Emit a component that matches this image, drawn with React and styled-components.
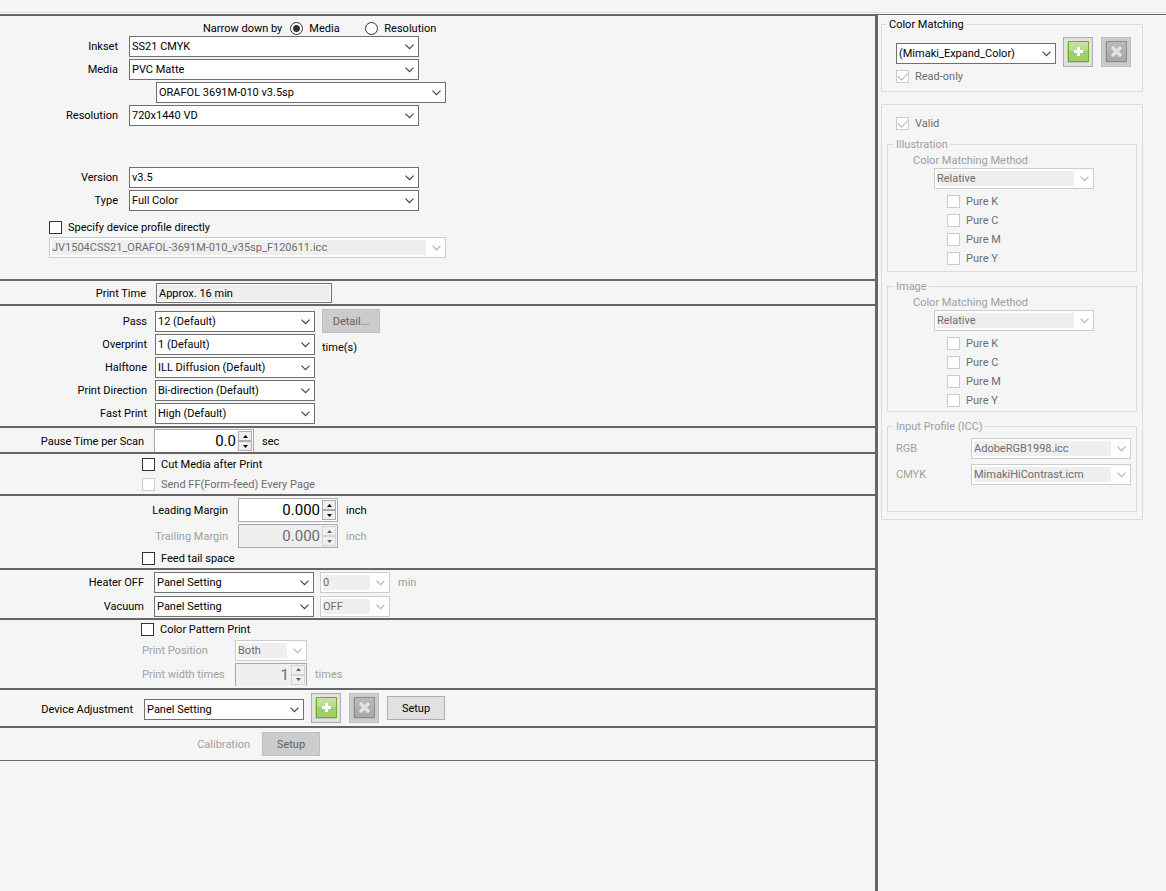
import React, { useId, useState } from 'react';
import styled, { createGlobalStyle, css } from 'styled-components';

// Drop-down with a thin chevron
const Combo = ({ id, options, width, disabled, label }) => (
  <ComboWrap $width={width}>
    <ComboSelect id={id} disabled={disabled} aria-label={label} defaultValue={options[0]}>
      {options.map((option) => (
        <option key={option}>{option}</option>
      ))}
    </ComboSelect>
    <Chevron viewBox="0 0 9 6" $disabled={disabled}>
      <path d="M0.5 0.7 L4.5 4.7 L8.5 0.7" fill="none" strokeWidth="1.1" />
    </Chevron>
  </ComboWrap>
);

const LabeledCombo = ({ text, labelWidth, gap, top, width, options }) => {
  const id = useId();
  return (
    <Row $gap={gap} $top={top}>
      <Label htmlFor={id} $width={labelWidth}>{text}</Label>
      <Combo id={id} width={width} options={options} />
    </Row>
  );
};

const Check = ({ text, disabled, defaultChecked }) => (
  <CheckLabel $disabled={disabled}>
    <CheckBox type="checkbox" disabled={disabled} defaultChecked={defaultChecked} />
    {text}
  </CheckLabel>
);

// Numeric field with up / down buttons
const Spinner = ({ id, initial, step, digits, width = 100, disabled }) => {
  const [value, setValue] = useState(initial);
  const change = (delta) => {
    setValue((prev) => Math.max(0, Number(prev) + delta).toFixed(digits));
  };

  return (
    <SpinnerWrap $width={width} $disabled={disabled}>
      <SpinnerInput id={id} type="text" value={value} disabled={disabled} onChange={(e) => setValue(e.target.value)} />
      <SpinnerButtons>
        <SpinnerButton type="button" aria-label="Increase" disabled={disabled} onClick={() => change(step)}>
          <svg width="5" height="3" viewBox="0 0 5 3"><path d="M0 3 L2.5 0 L5 3 Z" fill="currentColor" /></svg>
        </SpinnerButton>
        <SpinnerButton type="button" aria-label="Decrease" disabled={disabled} onClick={() => change(-step)}>
          <svg width="5" height="3" viewBox="0 0 5 3"><path d="M0 0 L2.5 3 L5 0 Z" fill="currentColor" /></svg>
        </SpinnerButton>
      </SpinnerButtons>
    </SpinnerWrap>
  );
};

const AddButton = () => (
  <IconButton type="button" aria-label="Add">
    <svg width="22" height="22" viewBox="0 0 22 22">
      <defs>
        <linearGradient id="addFill" x1="0" y1="0" x2="0" y2="1">
          <stop offset="0" stopColor="#cbe3a8" />
          <stop offset="0.45" stopColor="#b8da8a" />
          <stop offset="0.5" stopColor="#a3cf68" />
          <stop offset="1" stopColor="#a5d066" />
        </linearGradient>
      </defs>
      <rect x="0" y="1" width="21" height="21" fill="#c4c8c0" />
      <rect x="1.5" y="0.5" width="20" height="20" fill="url(#addFill)" stroke="#6fae1c" />
      <path d="M10 6 H13 V9 H16 V12 H13 V15 H10 V12 H7 V9 H10 Z" fill="#fff" />
    </svg>
  </IconButton>
);

const RemoveButton = () => (
  <IconButton type="button" aria-label="Remove" disabled>
    <svg width="22" height="22" viewBox="0 0 22 22">
      <defs>
        <linearGradient id="removeFill" x1="0" y1="0" x2="0" y2="1">
          <stop offset="0" stopColor="#bababa" />
          <stop offset="1" stopColor="#a6a6a6" />
        </linearGradient>
      </defs>
      <rect x="0" y="1" width="21" height="21" fill="#bababa" />
      <rect x="1.5" y="0.5" width="20" height="20" fill="url(#removeFill)" stroke="#8c8c8c" />
      <path d="M7 6 L16 15 M16 6 L7 15" stroke="#e2e2e2" strokeWidth="3.4" />
    </svg>
  </IconButton>
);

const MatchingMethod = ({ title, pad }) => {
  const id = useId();
  return (
    <Group $muted $pad={pad}>
      <Legend $muted>{title}</Legend>
      <MethodLabel htmlFor={id}>Color Matching Method</MethodLabel>
      <MethodBody>
        <Combo id={id} width={160} options={['Relative']} disabled />
        <PureList>
          {['K', 'C', 'M', 'Y'].map((ink) => (
            <Check key={ink} text={`Pure ${ink}`} disabled />
          ))}
        </PureList>
      </MethodBody>
    </Group>
  );
};

const App = () => {
  const [narrowBy, setNarrowBy] = useState('media');

  return (
    <>
      <GlobalStyle />
      <Page>
        <TopStrip />
        <Columns>
          <Settings>
            <Section>
              <RadioRow>
                <span>Narrow down by</span>
                <RadioLabel>
                  <Radio type="radio" name="narrow" checked={narrowBy === 'media'} onChange={() => setNarrowBy('media')} />
                  Media
                </RadioLabel>
                <RadioLabel>
                  <Radio type="radio" name="narrow" checked={narrowBy === 'resolution'} onChange={() => setNarrowBy('resolution')} />
                  Resolution
                </RadioLabel>
              </RadioRow>
              <Stack>
                <LabeledCombo text="Inkset" labelWidth={118} gap={11} width={290} options={['SS21 CMYK']} />
                <LabeledCombo text="Media" labelWidth={118} gap={11} width={290} options={['PVC Matte']} />
                <Row $indent={156}>
                  <Combo label="Media profile" width={290} options={['ORAFOL 3691M-010 v3.5sp']} />
                </Row>
                <LabeledCombo text="Resolution" labelWidth={118} gap={11} width={290} options={['720x1440 VD']} />
              </Stack>
              <Stack $top={41}>
                <LabeledCombo text="Version" labelWidth={118} gap={11} width={290} options={['v3.5']} />
                <LabeledCombo text="Type" labelWidth={118} gap={11} width={290} options={['Full Color']} />
              </Stack>
              <ProfileStack>
                <Check text="Specify device profile directly" />
                <Combo
                  label="Device profile"
                  width={397}
                  options={['JV1504CSS21_ORAFOL-3691M-010_v35sp_F120611.icc']}
                  disabled
                />
              </ProfileStack>
            </Section>

            <Section $pad="2px 0 1px">
              <Row $gap={10}>
                <Label htmlFor="printTime" $width={146}>Print Time</Label>
                <ReadOnlyInput id="printTime" type="text" readOnly value="Approx. 16 min" />
              </Row>
            </Section>

            <Section $pad="5px 0 2px">
              <PassLayout>
                <Stack>
                  <LabeledCombo text="Pass" labelWidth={147} gap={8} width={160} options={['12 (Default)']} />
                  <LabeledCombo text="Overprint" labelWidth={147} gap={8} width={160} options={['1 (Default)']} />
                  <LabeledCombo text="Halftone" labelWidth={147} gap={8} width={160} options={['ILL Diffusion (Default)']} />
                  <LabeledCombo text="Print Direction" labelWidth={147} gap={8} width={160} options={['Bi-direction (Default)']} />
                  <LabeledCombo text="Fast Print" labelWidth={147} gap={8} width={160} options={['High (Default)']} />
                </Stack>
                <PassSide>
                  <Button type="button" disabled>Detail...</Button>
                  <span>time(s)</span>
                </PassSide>
              </PassLayout>
            </Section>

            <Section $pad="1px 0 0" $clip={24}>
              <Row $gap={10}>
                <Label htmlFor="pause" $width={144}>Pause Time per Scan</Label>
                <Field>
                  <Spinner id="pause" initial="0.0" step={0.1} digits={1} />
                  <Unit>sec</Unit>
                </Field>
              </Row>
            </Section>

            <Section $pad="4px 0 3px">
              <CheckStack>
                <Check text="Cut Media after Print" />
                <Check text="Send FF(Form-feed) Every Page" disabled />
              </CheckStack>
            </Section>

            <Section $pad="2px 0 3px">
              <Stack>
                <Row $gap={10}>
                  <Label htmlFor="leading" $width={228}>Leading Margin</Label>
                  <Field>
                    <Spinner id="leading" initial="0.000" step={0.1} digits={3} />
                    <Unit>inch</Unit>
                  </Field>
                </Row>
                <Row $gap={10}>
                  <Label htmlFor="trailing" $width={228} $muted>Trailing Margin</Label>
                  <Field>
                    <Spinner id="trailing" initial="0.000" step={0.1} digits={3} disabled />
                    <Unit $muted>inch</Unit>
                  </Field>
                </Row>
                <Row $indent={142} $top={2}>
                  <Check text="Feed tail space" />
                </Row>
              </Stack>
            </Section>

            <Section $pad="2px 0 1px">
              <Stack $gap={3}>
                <Row $gap={6}>
                  <LabeledCombo text="Heater OFF" labelWidth={144} gap={10} width={160} options={['Panel Setting']} />
                  <Field>
                    <Combo label="Heater off time" width={70} options={['0']} disabled />
                    <Unit $muted>min</Unit>
                  </Field>
                </Row>
                <Row $gap={6}>
                  <LabeledCombo text="Vacuum" labelWidth={144} gap={10} width={160} options={['Panel Setting']} />
                  <Combo label="Vacuum level" width={70} options={['OFF']} disabled />
                </Row>
              </Stack>
            </Section>

            <Section $pad="3px 0 2px">
              <PatternStack>
                <Check text="Color Pattern Print" />
                <Row>
                  <PatternLabel htmlFor="position">Print Position</PatternLabel>
                  <Combo id="position" width={72} options={['Both']} disabled />
                </Row>
                <ClippedRow>
                  <PatternLabel htmlFor="widthTimes">Print width times</PatternLabel>
                  <Field>
                    <Spinner id="widthTimes" initial="1" step={1} digits={0} width={72} disabled />
                    <Unit $muted>times</Unit>
                  </Field>
                </ClippedRow>
              </PatternStack>
            </Section>

            <Section $pad="3px 0">
              <Row $gap={7}>
                <LabeledCombo text="Device Adjustment" labelWidth={133} gap={11} top={2} width={160} options={['Panel Setting']} />
                <Field>
                  <AddButton />
                  <RemoveButton />
                  <Button type="button">Setup</Button>
                </Field>
              </Row>
            </Section>

            <Section $pad="4px 0" $last>
              <Row $gap={12}>
                <Label as="span" $width={250} $muted>Calibration</Label>
                <Button type="button" disabled>Setup</Button>
              </Row>
            </Section>
          </Settings>

          <Matching>
            <Group $pad={8}>
              <Legend>Color Matching</Legend>
              <ProfilePicker>
                <Row $top={2}>
                  <Combo label="Color matching profile" width={160} options={['(Mimaki_Expand_Color)']} />
                </Row>
                <Field>
                  <AddButton />
                  <RemoveButton />
                </Field>
              </ProfilePicker>
              <Row $indent={14} $top={3}>
                <Check text="Read-only" disabled defaultChecked />
              </Row>
            </Group>

            <DetailBox>
              <Row $indent={9}>
                <Check text="Valid" disabled defaultChecked />
              </Row>
              <MatchingMethod title="Illustration" pad={6} />
              <MatchingMethod title="Image" pad={4} />
              <Group $muted $pad={8}>
                <Legend $muted>Input Profile (ICC)</Legend>
                <ProfileRows>
                  <label htmlFor="rgb">RGB</label>
                  <Combo id="rgb" width={160} options={['AdobeRGB1998.icc']} disabled />
                  <label htmlFor="cmyk">CMYK</label>
                  <Combo id="cmyk" width={160} options={['MimakiHiContrast.icm']} disabled />
                </ProfileRows>
              </Group>
            </DetailBox>
          </Matching>
        </Columns>
      </Page>
    </>
  );
};

// Styled components
const line = '#666';
const muted = '#a0a0a0';
const dim = '#6d6d6d';

const GlobalStyle = createGlobalStyle`
  * {
    box-sizing: border-box;
  }

  body {
    margin: 0;
    background: #f5f5f5;
    color: #000;
    font: 11px/15px Roboto, "Liberation Sans", sans-serif;
  }

  button, input, select {
    font: inherit;
    color: inherit;
    margin: 0;
  }
`;

const Page = styled.div`
  display: flex;
  flex-direction: column;
  min-height: 100vh;
`;

const TopStrip = styled.div`
  height: 14px;
  border-bottom: 1px solid #fff;
  box-shadow: inset 0 -1px #d9d9d9;
`;

const Columns = styled.div`
  display: flex;
  flex: 1;
`;

const Settings = styled.main`
  flex: 1;
  min-width: 0;
  border-top: 2px solid ${line};
`;

const Section = styled.section`
  padding: ${({ $pad }) => $pad || '0 0 21px'};
  border-bottom: ${({ $last }) => ($last ? 1 : 2)}px solid ${line};
  ${({ $clip }) => $clip && css`
    max-height: ${$clip + 2}px;
    overflow: hidden;
  `}
`;

const Row = styled.div`
  display: flex;
  align-items: center;
  gap: ${({ $gap }) => $gap || 0}px;
  padding-left: ${({ $indent }) => $indent || 0}px;
  padding-top: ${({ $top }) => $top || 0}px;
`;

const Field = styled.div`
  display: flex;
  align-items: center;
  gap: 8px;
`;

const Stack = styled.div`
  display: flex;
  flex-direction: column;
  gap: ${({ $gap }) => $gap || 2}px;
  padding-top: ${({ $top }) => $top || 0}px;
`;

const ProfileStack = styled(Stack)`
  align-items: flex-start;
  gap: 3px;
  padding: 10px 0 0 49px;
`;

const CheckStack = styled(Stack)`
  gap: 7px;
  padding-left: 142px;
`;

const PatternStack = styled(Stack)`
  gap: 2px;
  padding-left: 141px;

  > :first-child {
    margin-bottom: 2px;
  }
`;

// The last row runs under the edge of its section
const ClippedRow = styled(Row)`
  height: 23px;
  overflow: hidden;
`;

const Label = styled.label`
  width: ${({ $width }) => $width}px;
  text-align: right;
  white-space: nowrap;
  color: ${({ $muted }) => ($muted ? muted : '#000')};
`;

const PatternLabel = styled.label`
  width: 94px;
  padding-left: 1px;
  color: ${muted};
`;

const Unit = styled.span`
  color: ${({ $muted }) => ($muted ? muted : '#000')};
`;

const RadioRow = styled.div`
  display: flex;
  align-items: center;
  height: 20px;
  padding: 5px 0 0 203px;
`;

const RadioLabel = styled.label`
  display: flex;
  align-items: center;
  gap: 6px;
  width: 75px;

  span + & {
    margin-left: 8px;
  }
`;

const Radio = styled.input`
  appearance: none;
  flex: none;
  width: 13px;
  height: 13px;
  border: 1px solid #333;
  border-radius: 50%;
  background: #fff;

  &:checked {
    background: radial-gradient(circle, #333 0 3px, #fff 4px);
  }
`;

const CheckLabel = styled.label`
  display: flex;
  align-items: center;
  gap: 6px;
  height: 13px;
  white-space: nowrap;
  color: ${({ $disabled }) => ($disabled ? dim : '#000')};
`;

const CheckBox = styled.input`
  appearance: none;
  flex: none;
  width: 13px;
  height: 13px;
  border: 1px solid #333;
  background: #fff;

  &:disabled {
    border-color: #ccc;
  }

  &:checked::before {
    content: '';
    display: block;
    width: 9px;
    height: 5px;
    margin: 2px 0 0 1px;
    border: solid #b4b4b4;
    border-width: 0 0 1px 1px;
    transform: translateY(-1px) rotate(-45deg);
  }
`;

const ComboWrap = styled.div`
  position: relative;
  flex: none;
  width: ${({ $width }) => $width}px;
  height: 21px;
`;

const ComboSelect = styled.select`
  appearance: none;
  display: block;
  width: 100%;
  height: 21px;
  padding: 2px 19px 2px 2px;
  border: 1px solid #707070;
  border-radius: 0;
  background: #fff;

  &:disabled {
    border-color: #ccc;
    background: linear-gradient(#efefef, #efefef) content-box, #fff;
    color: ${dim};
    opacity: 1;
  }
`;

const Chevron = styled.svg`
  position: absolute;
  top: 8px;
  right: 5px;
  width: 9px;
  height: 6px;
  stroke: ${({ $disabled }) => ($disabled ? '#b0b0b0' : '#404040')};
  pointer-events: none;
`;

const ReadOnlyInput = styled.input`
  width: 176px;
  height: 20px;
  padding: 0 2px;
  border: 1px solid #707070;
  background: #efefef;
  box-shadow: inset 0 0 0 1px #fff;
`;

const SpinnerWrap = styled.div`
  display: flex;
  align-items: center;
  width: ${({ $width }) => $width}px;
  height: 24px;
  padding: 1px;
  border: 1px solid #a9a9b0;
  background: ${({ $disabled }) => ($disabled ? '#efefef' : '#fff')};
  color: ${({ $disabled }) => ($disabled ? dim : '#000')};
`;

const SpinnerInput = styled.input`
  flex: 1;
  min-width: 0;
  height: 20px;
  padding: 0 2px 0 0;
  border: 0;
  background: transparent;
  font-size: 15px;
  line-height: 20px;
  text-align: right;
`;

const SpinnerButtons = styled.div`
  display: flex;
  flex-direction: column;
  width: 14px;
  height: 20px;
`;

const SpinnerButton = styled.button`
  display: flex;
  flex: 1;
  align-items: center;
  justify-content: center;
  min-height: 0;
  padding: 0;
  border: 1px solid #acacac;
  background: #efefef;

  &:disabled {
    border-color: #d4d4d4;
    color: #606060;
  }
`;

const Button = styled.button`
  width: 58px;
  height: 24px;
  padding: 0;
  border: 1px solid #adadad;
  background: #e1e1e1;

  &:disabled {
    border-color: #bfbfbf;
    background: #ccc;
    color: #606060;
  }
`;

const IconButton = styled(Button)`
  flex: none;
  display: flex;
  align-items: center;
  justify-content: center;
  width: 30px;
  height: 30px;
`;

const PassLayout = styled.div`
  display: flex;
  align-items: flex-start;
  gap: 7px;
`;

const PassSide = styled.div`
  display: flex;
  flex-direction: column;
  gap: 7px;
  margin-top: -2px;
`;

const Matching = styled.aside`
  flex: none;
  width: 291px;
  padding: 2px 23px 0 3px;
  border-top: 1px solid ${line};
  border-left: 3px solid ${line};
`;

const Group = styled.fieldset`
  min-width: 0;
  margin: 0;
  padding: 0 0 ${({ $pad }) => $pad}px;
  border: 1px solid #dcdcdc;
  color: ${({ $muted }) => ($muted ? muted : '#000')};
`;

const Legend = styled.legend`
  margin-left: ${({ $muted }) => ($muted ? 6 : 5)}px;
  padding: 0 2px;
`;

const ProfilePicker = styled.div`
  display: flex;
  align-items: center;
  gap: 7px;
  padding: 5px 0 0 14px;
`;

const DetailBox = styled.div`
  display: flex;
  flex-direction: column;
  gap: 7px;
  margin-top: 12px;
  padding: 12px 5px 7px;
  border: 1px solid #dcdcdc;
`;

const MethodLabel = styled.label`
  display: block;
  padding: 1px 0 0 25px;
`;

const MethodBody = styled.div`
  padding-left: 46px;
`;

const PureList = styled.div`
  display: flex;
  flex-direction: column;
  gap: 6px;
  padding: 6px 0 0 13px;
`;

const ProfileRows = styled.div`
  display: grid;
  grid-template-columns: 1fr 160px;
  align-items: center;
  gap: 5px;
  padding: 4px 5px 18px 8px;
`;

export default App;
